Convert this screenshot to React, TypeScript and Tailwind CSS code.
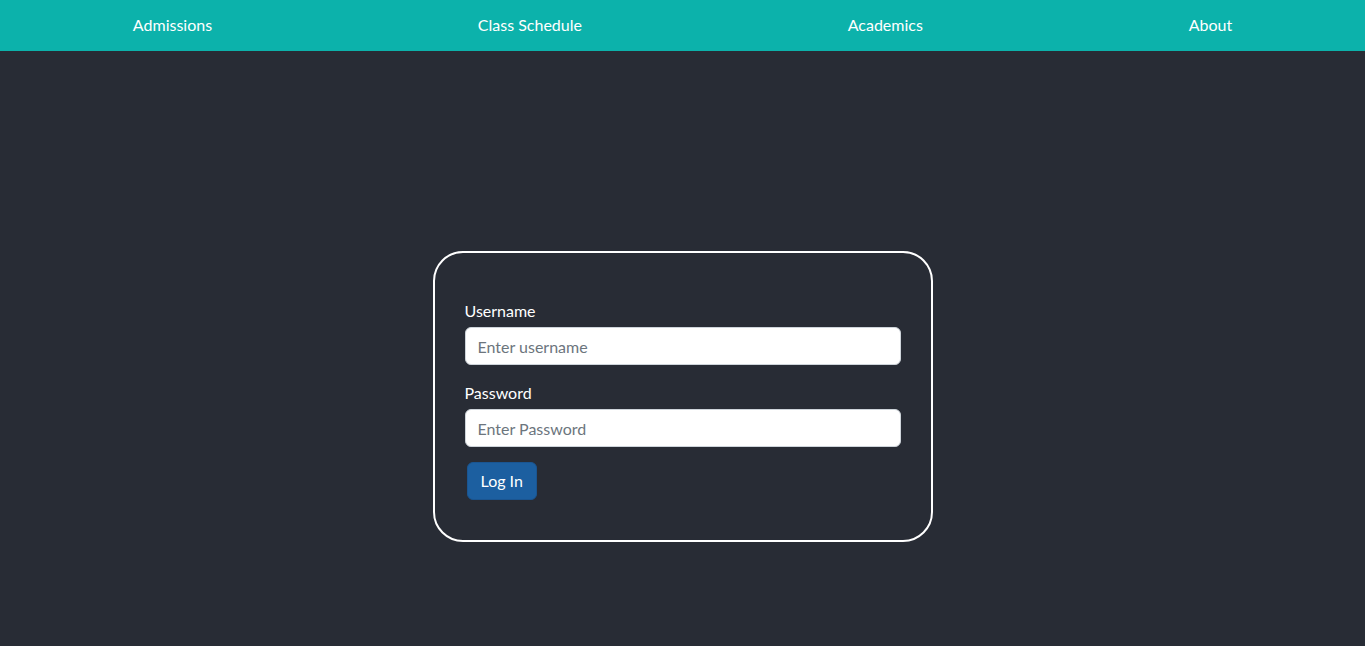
export default function App() {
  const font = { fontFamily: 'Lato, "Noto Sans", sans-serif' };
  return (
    <div className="min-h-[646px] bg-[#282c35] text-white font-['Lato',sans-serif]" style={font}>
      <nav className="h-[51px] bg-[#0cb2ab] flex items-center justify-around text-[16px] text-white pb-[2px]">
        <a>Admissions</a>
        <a>Class Schedule</a>
        <a>Academics</a>
        <a>About</a>
      </nav>
      <main className="flex justify-center pt-[200px]">
        <div className="w-[500px] h-[291px] border-2 border-white rounded-[30px] px-[30px] pt-[46px]">
          <label className="block text-[16px] leading-[24px] mb-[4px]">Username</label>
          <input
            className="block w-full h-[38px] bg-white rounded-[6px] border border-[#ced4da] px-3 text-[16px] text-[#212529] placeholder:text-[#6c757d] outline-none"
            placeholder="Enter username"
          />
          <label className="block text-[16px] leading-[24px] mt-[16px] mb-[4px]">Password</label>
          <input
            type="password"
            className="block w-full h-[38px] bg-white rounded-[6px] border border-[#ced4da] px-3 text-[16px] text-[#212529] placeholder:text-[#6c757d] outline-none"
            placeholder="Enter Password"
          />
          <button className="mt-[15px] ml-[2px] h-[38px] px-[13px] rounded-[6px] bg-[#1c5fa0] border border-[#1a5591] text-white text-[16px]">
            Log In
          </button>
        </div>
      </main>
    </div>
  );
}
